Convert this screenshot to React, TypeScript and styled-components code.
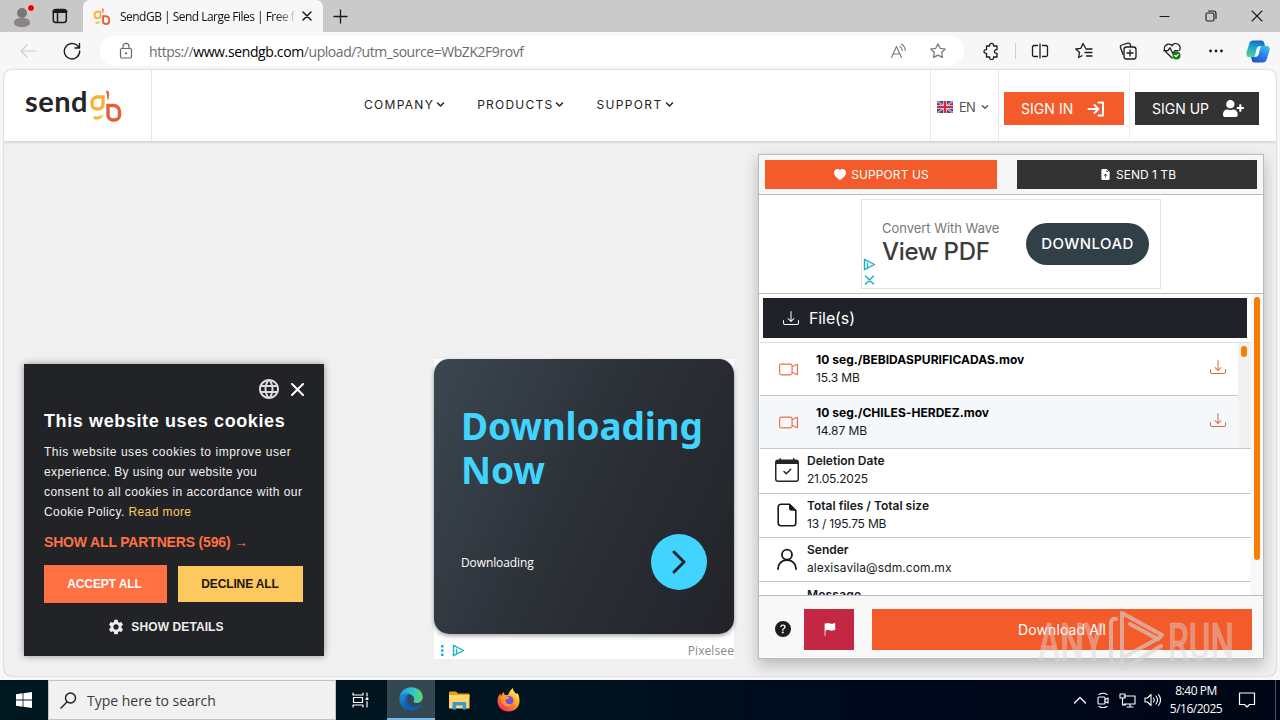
import React from "react";
import styled, { createGlobalStyle } from "styled-components";
import {
  BsCalendarCheck,
  BsCameraVideo,
  BsDownload,
  BsEnvelope,
  BsFileEarmarkArrowUpFill,
  BsFlagFill,
  BsHeartFill,
  BsQuestionCircleFill,
} from "react-icons/bs";
import { FaUserPlus } from "react-icons/fa";
import { MdLanguage, MdSettings } from "react-icons/md";

const Global = createGlobalStyle`
  *, *::before, *::after { box-sizing: border-box; }
  body { margin: 0; overflow: hidden; }
  svg { display: block; flex: none; }
  button { border: 0; margin: 0; padding: 0; background: none; font: inherit; color: inherit; }
`;

const segoe = '"Open Sans", "Noto Sans", sans-serif';
const inter = 'Inter, "Liberation Sans", sans-serif';

const Screen = styled.div`
  position: relative;
  display: flex;
  flex-direction: column;
  width: 1280px;
  height: 720px;
  overflow: hidden;
  background: #f7f7f7;
  font-family: ${inter};
  color: #212529;
`;

/* Text with the width tuned through letter-spacing */
const Label = styled.span<{ $size: number; $ls?: number; $weight?: number; $color?: string; $lh?: number }>`
  font-size: ${(p) => p.$size}px;
  letter-spacing: ${(p) => p.$ls ?? 0}px;
  font-weight: ${(p) => p.$weight ?? 400};
  color: ${(p) => p.$color ?? "inherit"};
  line-height: ${(p) => (p.$lh ? `${p.$lh}px` : "normal")};
  white-space: nowrap;
`;

/* ---------- Browser chrome ---------- */

const TabStrip = styled.div`
  display: flex;
  height: 32px;
  background: #cacaca;
  font-family: ${segoe};
`;

const TabTools = styled.div`
  display: flex;
  align-items: center;
  width: 83px;
  height: 32px;
  padding-left: 12px;
  gap: 16px;
  background: #c8c8c8;
  border-radius: 0 0 7px 0;
`;

const Tab = styled.div`
  display: flex;
  align-items: center;
  width: 240px;
  height: 32px;
  padding: 0 10px 0 10px;
  background: #f7f7f7;
  border-radius: 7px 7px 0 0;
`;

const TabTitle = styled.div`
  width: 176px;
  margin: 0 6px 0 9px;
  overflow: hidden;
  white-space: nowrap;
  font-size: 12px;
  letter-spacing: -0.52px;
  color: #111;
  mask-image: linear-gradient(90deg, #000 156px, transparent 178px);
`;

const TabRest = styled.div`
  display: flex;
  flex: 1;
  align-items: center;
  justify-content: space-between;
  padding: 0 17px 0 10px;
`;

const WindowButtons = styled.div`
  display: flex;
  align-items: center;
  gap: 34px;
`;

const Toolbar = styled.div`
  display: flex;
  align-items: center;
  height: 38px;
  padding: 0 10px 0 19px;
  background: #f7f7f7;
  font-family: ${segoe};
`;

const AddressBar = styled.div`
  display: flex;
  align-items: center;
  width: 864px;
  height: 30px;
  flex: none;
  margin-left: 19px;
  padding: 0 17px 0 18px;
  border-radius: 15px;
  background: #fff;
`;

const Url = styled.div`
  flex: 1;
  margin-left: 15px;
  font-size: 14px;
  letter-spacing: -0.45px;
  white-space: nowrap;
  color: #6c6c6c;
  b { font-weight: 400; color: #000; letter-spacing: -0.37px; }
`;

const Separator = styled.div<{ $gap: number }>`
  width: 1px;
  height: 16px;
  margin: 0 ${(p) => p.$gap}px;
  background: #cfcfcf;
`;

const Gap = styled.div<{ $w?: number }>`
  ${(p) => (p.$w ? `width: ${p.$w}px;` : "flex: 1;")}
`;

const ToolIcons = styled.div`
  display: flex;
  flex: 1;
  align-items: center;
  padding-left: 18px;
`;

const ActionIcons = styled.div<{ $gap: number }>`
  display: flex;
  align-items: center;
  gap: ${(p) => p.$gap}px;
`;

/* ---------- Page ---------- */

const Page = styled.div`
  display: flex;
  flex-direction: column;
  width: 1272px;
  height: 606px;
  margin: 0 4px 4px;
  overflow: hidden;
  border-radius: 8px;
  background: #f0f0f0;
  box-shadow: 0 0 2px rgba(0, 0, 0, 0.35);
`;

const Header = styled.header`
  display: flex;
  height: 71px;
  flex: none;
  background: #fff;
  box-shadow: 0 1px 3px rgba(0, 0, 0, 0.18);
`;

const LogoCell = styled.div`
  display: flex;
  width: 148px;
  padding: 13px 0 0 21px;
  border-right: 1px solid #e6e6e6;
`;

const LogoWord = styled.span`
  width: 64px;
  font-family: Lato, sans-serif;
  font-size: 29px;
  font-weight: 700;
  line-height: 36px;
  letter-spacing: 0.5px;
  color: #262427;
`;

const LogoMark = styled.div`
  padding-top: 5px;
`;

const Nav = styled.nav`
  display: flex;
  flex: 1;
  gap: 32px;
  padding: 27px 0 0 212px;
`;

const NavItem = styled.div`
  display: flex;
  align-items: center;
  height: 15px;
  gap: 2px;
`;

const HeaderCell = styled.div<{ $w: number; $last?: boolean }>`
  display: flex;
  width: ${(p) => p.$w}px;
  padding: 22px 5px 0;
  border-left: 1px solid ${(p) => (p.$last ? "#f0f0f0" : "#e9e9e9")};
`;

const Language = styled.div`
  display: flex;
  align-items: center;
  height: 30px;
  padding-left: 1px;
  gap: 6px;
`;

const AccountButton = styled.button<{ $dark?: boolean; $w: number }>`
  display: flex;
  align-items: center;
  justify-content: space-between;
  width: ${(p) => p.$w}px;
  height: 33px;
  flex: none;
  padding: 0 ${(p) => (p.$dark ? 15 : 19)}px 0 17px;
  background: ${(p) => (p.$dark ? "#333" : "#f35b2b")};
  color: #fff;
`;

const Body = styled.main`
  display: flex;
  flex: 1;
  align-items: flex-start;
  padding: 13px 0 0 20px;
`;

/* ---------- Cookie dialog ---------- */

const CookieBox = styled.section`
  width: 300px;
  height: 292px;
  margin-top: 210px;
  padding: 15px 20px 0;
  background: #212326;
  color: #fff;
  box-shadow: 0 0 7px rgba(0, 0, 0, 0.4);
  font-family: "Liberation Sans", Arial, sans-serif;
`;

const CookieTools = styled.div`
  display: flex;
  align-items: center;
  justify-content: flex-end;
  gap: 10px;
  height: 20px;
`;

const CookieTitle = styled.h2`
  margin: 11px 0 0;
  font-size: 18px;
  line-height: 22px;
  letter-spacing: 0.61px;
  white-space: nowrap;
`;

const CookieText = styled.div`
  display: flex;
  flex-direction: column;
  margin-top: 10px;
`;

const Link = styled.span`
  color: #fdc95e;
`;

const Partners = styled.div`
  margin-top: 11px;
  font-size: 14px;
  font-weight: 700;
  line-height: 19px;
  letter-spacing: -0.17px;
  white-space: nowrap;
  color: #ff7043;
`;

const CookieButtons = styled.div`
  display: flex;
  align-items: center;
  justify-content: space-between;
  height: 38px;
  margin-top: 13px;
`;

const CookieButton = styled.button<{ $accept?: boolean }>`
  width: ${(p) => (p.$accept ? 123 : 125)}px;
  height: ${(p) => (p.$accept ? 38 : 36)}px;
  margin-right: ${(p) => (p.$accept ? 0 : 1)}px;
  padding: 0 ${(p) => (p.$accept ? 2 : 1)}px 2px 0;
  background: ${(p) => (p.$accept ? "#ff7043" : "#fdc95e")};
  color: ${(p) => (p.$accept ? "#fff" : "#21170f")};
`;

const Details = styled.div`
  display: flex;
  align-items: center;
  justify-content: center;
  gap: 6px;
  margin: 15px 17px 0 0;
  color: #ededed;
`;

/* ---------- Centre advert ---------- */

const Advert = styled.section`
  width: 300px;
  height: 300px;
  margin: 205px 0 0 110px;
  background: #fff;
  font-family: "Open Sans", sans-serif;
`;

const AdvertCard = styled.div`
  display: flex;
  flex-direction: column;
  justify-content: space-between;
  height: 275px;
  padding: 45px 27px 44px;
  border-radius: 15px;
  background: linear-gradient(115deg, #3b4751 0%, #2c3037 50%, #212328 100%);
  box-shadow: 0 2px 4px rgba(0, 0, 0, 0.35);
`;

const AdvertTitle = styled.div`
  font-family: "Noto Sans", sans-serif;
  font-size: 37px;
  font-weight: 700;
  line-height: 44px;
  letter-spacing: -0.15px;
  color: #40d4ff;
`;

const AdvertRow = styled.div`
  display: flex;
  align-items: center;
  justify-content: space-between;
`;

const Round = styled.div`
  display: flex;
  align-items: center;
  justify-content: center;
  width: 56px;
  height: 56px;
  border-radius: 50%;
  background: #40d4ff;
`;

const AdvertFoot = styled.div`
  display: flex;
  align-items: center;
  height: 22px;
  padding-left: 6px;
  gap: 7px;
  margin-top: 5px;
`;

const Push = styled.span`
  margin-left: auto;
  line-height: 1;
`;

/* ---------- Download panel ---------- */

const Panel = styled.section`
  display: flex;
  flex-direction: column;
  width: 506px;
  height: 505px;
  margin: 0 0 0 24px;
  border: 1px solid #b7bcc0;
  background: #fff;
  box-shadow: 0 6px 14px rgba(0, 0, 0, 0.24);
`;

const PanelTop = styled.div`
  display: flex;
  justify-content: space-between;
  height: 40px;
  padding: 5px 6px 0;
  background: #f7f7f7;
  border-bottom: 1px solid #b7bcc0;
`;

const TopButton = styled.button<{ $dark?: boolean }>`
  display: flex;
  align-items: center;
  justify-content: center;
  gap: 5px;
  width: ${(p) => (p.$dark ? 240 : 232)}px;
  height: 29px;
  padding-left: ${(p) => (p.$dark ? 2 : 1)}px;
  background: ${(p) => (p.$dark ? "#333" : "#f35b2b")};
  color: #fff;
`;

const Banner = styled.div`
  display: flex;
  justify-content: center;
  height: 99px;
  padding-top: 4px;
  border-bottom: 1px solid #b7bcc0;
`;

const BannerCard = styled.div`
  display: flex;
  width: 300px;
  height: 90px;
  border: 1px solid #e2e2e2;
`;

const BannerMarks = styled.div`
  display: flex;
  flex-direction: column;
  width: 20px;
  padding: 58px 0 0 1px;
  gap: 4px;
`;

const BannerCopy = styled.div`
  display: flex;
  flex-direction: column;
  width: 144px;
  padding-top: 19px;
`;

const BannerButton = styled.div`
  display: flex;
  align-items: center;
  justify-content: center;
  width: 123px;
  height: 42px;
  margin-top: 23px;
  padding-bottom: 1px;
  border-radius: 21px;
  background: #313f46;
`;

const ScrollArea = styled.div`
  display: flex;
  height: 301px;
  overflow: hidden;
`;

const ScrollContent = styled.div`
  width: 492px;
  flex: none;
`;

const OuterTrack = styled.div`
  width: 12px;
  padding: 3px 0 0 3px;
  background: #f8f8f8;
`;

const Thumb = styled.div<{ $w: number; $h: number }>`
  width: ${(p) => p.$w}px;
  height: ${(p) => p.$h}px;
  border-radius: 3px;
  background: #f77d05;
`;

const FilesBar = styled.div`
  display: flex;
  align-items: center;
  width: 484px;
  height: 40px;
  margin: 4px 0 4px 4px;
  padding-left: 20px;
  gap: 10px;
  background: #20222a;
  color: #fff;
`;

const FileList = styled.div`
  display: flex;
  margin-left: 1px;
  height: 107px;
  border: solid #c5c8ca;
  border-width: 1px 0;
  border-top-color: #dcdedf;
`;

const FileRows = styled.div`
  width: 478px;
`;

const FileRow = styled.div<{ $alt?: boolean }>`
  display: flex;
  align-items: center;
  height: ${(p) => (p.$alt ? 52 : 53)}px;
  padding: 0 12px 0 19px;
  border-bottom: ${(p) => (p.$alt ? 0 : 1)}px solid #c5c8ca;
  background: ${(p) => (p.$alt ? "#f5f8fb" : "#fff")};
  color: #e8704f;
`;

const DownloadIcon = styled(BsDownload)`
  margin-bottom: 4px;
  color: #dd6740;
`;

const TextPair = styled.div`
  display: flex;
  flex: 1;
  flex-direction: column;
  margin-top: -2px;
  color: #17191c;
`;

const FileText = styled(TextPair)`
  margin-top: 0;
  padding-left: 18px;
`;

const InnerTrack = styled.div`
  width: 13px;
  padding: 3px 0 0 3px;
  background: #f1f1f1;
`;

const InfoRow = styled.div<{ $h: number }>`
  display: flex;
  align-items: center;
  height: ${(p) => p.$h}px;
  padding-left: 16px;
  gap: 8px;
  border-bottom: 1px solid #c5c8ca;
`;

const InfoIcon = styled.div`
  margin-top: -2px;
`;

const PanelFoot = styled.div`
  display: flex;
  align-items: center;
  flex: 1;
  padding: 4px 11px 0 16px;
  border-top: 1px solid #b7bcc0;
  background: #f8f8f8;
`;

const FlagButton = styled.button`
  display: flex;
  align-items: center;
  justify-content: center;
  width: 50px;
  height: 41px;
  margin: 0 18px 0 13px;
  background: #c32744;
  color: #fff;
`;

const DownloadAll = styled.button`
  flex: 1;
  height: 41px;
  background: #f35b2b;
`;

/* ---------- Taskbar ---------- */

const Taskbar = styled.footer`
  display: flex;
  align-items: center;
  height: 40px;
  flex: none;
  background: linear-gradient(90deg, #001820 0%, #00141f 40%, #000a1d 65%, #000616 100%);
  color: #fff;
  font-family: ${segoe};
`;

const TaskCell = styled.div<{ $w: number; $active?: boolean }>`
  display: flex;
  align-items: center;
  justify-content: center;
  width: ${(p) => p.$w}px;
  height: 40px;
  background: ${(p) => (p.$active ? "#344851" : "transparent")};
  border-bottom: ${(p) => (p.$active ? "2px solid #76b9ed" : "0")};
`;

const Search = styled.div`
  display: flex;
  align-items: center;
  width: 288px;
  height: 40px;
  padding-left: 11px;
  gap: 10px;
  border: 1px solid #c4c4c4;
  background: #f1f1f1;
`;

const Tray = styled.div`
  display: flex;
  align-items: center;
  margin-left: auto;
  gap: 8px;
`;

const TrayIcons = styled.div`
  display: flex;
  align-items: center;
  gap: 8px;
  margin-right: 1px;
`;

const Clock = styled.div`
  display: flex;
  flex-direction: column;
  align-items: center;
  width: 54px;
  margin: 0 1px 0 -1px;
`;

const Notice = styled.div`
  padding-left: 6px;
`;

const ShowDesktop = styled.div`
  width: 5px;
  height: 40px;
  margin-left: 11px;
  border-left: 1px solid #4b5460;
`;

const Watermark = styled.svg`
  position: absolute;
  left: 1030px;
  top: 600px;
`;

/* ---------- Icons ---------- */

type LineProps = { w?: number; h?: number; box?: string; sw?: number; color?: string; children: React.ReactNode };

const Line = ({ w = 18, h = w, box, sw = 1.2, color = "#1b1b1b", children }: LineProps) => (
  <svg width={w} height={h} viewBox={box ?? `0 0 ${w} ${h}`} fill="none" stroke={color} strokeWidth={sw} strokeLinecap="round" strokeLinejoin="round">
    {children}
  </svg>
);

const star = "M9 1.8l2.2 4.5 5 .7-3.6 3.5.9 4.9L9 13.1l-4.5 2.3.9-4.9L1.8 7l5-.7z";

const GbShape = () => (
  <>
    <path d="M14 9H8.500A5.500 5.500 0 0 0 3 14.500V16a5 5 0 0 0 5 5h1a5 5 0 0 0 5-5z" stroke="#f9b233" />
    <path d="M4.500 28.200c3.500.6 7.500.3 10-2.200-1 4.500-6 7-10 4.700z" fill="#f9b233" stroke="none" />
    <path d="M16.800 2.200l3 1.300c.8 3 .3 6.500-1.300 9.500-.2-4-.5-7-1.700-10.800z" fill="#e2603a" stroke="none" />
    <path d="M19 17.500V27a5 5 0 0 0 5 5h1.500a5 5 0 0 0 5-5v-3.500a6 6 0 0 0-6-6z" stroke="#e2603a" />
  </>
);

const Favicon = () => (
  <svg width="18" height="18" viewBox="0 0 34 34" fill="none" strokeWidth="3.600">
    <GbShape />
  </svg>
);

const GbMark = () => (
  <svg width="34" height="34" viewBox="0 0 34 34" fill="none" strokeWidth="3.400">
    <GbShape />
  </svg>
);

const Chevron = ({ size = 9, sw = 1.5, color = "#222" }) => (
  <Line w={size} h={size} box="0 0 9 9" sw={sw} color={color}>
    <path d="M1.500 3l3 3 3-3" />
  </Line>
);

const AdChoice = () => (
  <Line w={13} h={13} sw={1.4} color="#1cb0c4">
    <path d="M1.500 1.300v10.400l10-5.200zM4.500 5.300v4" />
  </Line>
);

const Flag = () => (
  <svg width="16" height="12" viewBox="0 0 16 12">
    <rect width="16" height="12" rx="1" fill="#3b4590" />
    <path d="M0 0l16 12M16 0L0 12" stroke="#e8d5e4" strokeWidth="1.800" />
    <path d="M0 0l16 12M16 0L0 12" stroke="#d6283c" strokeWidth="0.800" />
    <path d="M8 0v12M0 6h16" stroke="#f4e6ec" strokeWidth="3.600" />
    <path d="M8 0v12M0 6h16" stroke="#d6283c" strokeWidth="2.200" />
  </svg>
);

const SignInIcon = () => (
  <Line w={18} h={16} sw={2} color="#fff">
    <path d="M1.500 8h9.500M7.500 4l4 4-4 4M11.500 1.500H16v13h-4.500" />
  </Line>
);

const Document = () => (
  <svg width="24" height="24" viewBox="0 0 24 24" fill="none">
    <path d="M14.500 1.200H6A2.800 2.800 0 0 0 3.200 4v16A2.800 2.800 0 0 0 6 22.800h12a2.800 2.800 0 0 0 2.800-2.800V7.500z" stroke="#16181b" strokeWidth="1.600" />
    <path d="M14 .6v4.500a2.600 2.600 0 0 0 2.600 2.600h4.700z" fill="#16181b" />
  </svg>
);

const Copilot = () => (
  <svg width="24" height="23" viewBox="0 0 24 23">
    <defs>
      <linearGradient id="cpA" x1="0.5" y1="0" x2="0.3" y2="1">
        <stop offset="0" stopColor="#1568c8" />
        <stop offset="0.45" stopColor="#1fa8cf" />
        <stop offset="1" stopColor="#4fd29a" />
      </linearGradient>
      <linearGradient id="cpB" x1="0.8" y1="0" x2="0.2" y2="1">
        <stop offset="0" stopColor="#35c0ee" />
        <stop offset="0.5" stopColor="#2b7fea" />
        <stop offset="1" stopColor="#1e50c8" />
      </linearGradient>
    </defs>
    <path d="M7 .5h8.500c1.500 0 2.300 1 2.700 2.300L19 6h-3c-2 0-3 1-3.600 3l-1.800 5.500C10 16.500 9 17 7 17H3C.8 17 0 15 .5 12.500L3.300 3.500C4 1.500 5 .5 7 .5z" fill="url(#cpA)" />
    <path d="M17 22.500H8.500c-1.500 0-2.300-1-2.700-2.300L5 17h3c2 0 3-1 3.600-3l1.800-5.500C14 6.500 15 6 17 6h4c2.200 0 3 2 2.500 4.500l-2.800 9c-.7 2-1.700 3-3.700 3z" fill="url(#cpB)" />
    <path d="M11 7.500q1-1.500 4-1.500l-2.500 9q-1 2-4 2z" fill="#eef8ff" />
  </svg>
);

const EdgeLogo = () => (
  <svg width="24" height="24" viewBox="0 0 24 24">
    <defs>
      <linearGradient id="edA" x1="0" y1="0.4" x2="1" y2="0.4">
        <stop offset="0" stopColor="#2496dc" />
        <stop offset="0.55" stopColor="#30c3d6" />
        <stop offset="1" stopColor="#63d957" />
      </linearGradient>
      <linearGradient id="edB" x1="0" y1="0" x2="0.4" y2="1">
        <stop offset="0" stopColor="#1e8fdc" />
        <stop offset="1" stopColor="#0d58ad" />
      </linearGradient>
    </defs>
    <path d="M.5 11C1 4.500 6 .3 12.200.3c6.500 0 11.500 4.300 11.500 9.700 0 3.700-2.700 6-6 6-2.200 0-3.500-.8-3.200-1.700 1-1.300 1-4-1-5.500C9.500 5.500 3 6.500.5 11z" fill="url(#edA)" />
    <path d="M.4 11.500C2 7 6.800 6 10 7.200c-3 1.300-4 4.800-3.400 8 .8 4.500 4 7.500 8.200 8.200-1 .3-2 .4-3 .4C5.200 23.800 0 18 .4 11.500z" fill="url(#edB)" />
    <path d="M8.700 12c-1.200 5 3.500 9 9 7.500 1.800-.5 3-1.300 4-1.700.6-.2.8.3.5.8-3 4.700-9 6.300-13 3.400-4.600-3.200-4.500-10 .6-14.300-.6 1.500-.9 3-1.100 4.300z" fill="#0f5fb8" />
  </svg>
);

const Folder = () => (
  <svg width="21" height="19" viewBox="0 0 21 19">
    <path d="M0 1.500Q0 .5 1 .5h6l2 2h10.500q1 0 1 1V6H0z" fill="#e2a11c" />
    <path d="M0 4h20.500v13.500H0z" fill="#ffd867" />
    <path d="M3.500 18.500v-6.500q0-1 1-1h11.700q1 0 1 1v6.500h-3.500v-4H7v4z" fill="#3b97d9" />
  </svg>
);

const Firefox = () => (
  <svg width="23" height="24" viewBox="0 0 23 24">
    <defs>
      <linearGradient id="ffA" x1="0.8" y1="0.1" x2="0.2" y2="0.9">
        <stop offset="0" stopColor="#fff04a" />
        <stop offset="0.45" stopColor="#ff9a24" />
        <stop offset="1" stopColor="#fb2f5c" />
      </linearGradient>
    </defs>
    <path d="M11.500 23.500C5 23.500.5 19 .5 13c0-3 1-5.500 2.800-7.500l.5 2.700L6.500 4l1.500 3h3c1-3 2.500-5 4.800-7 .2 3 2 4 3.700 6l1-1c1.500 2.500 2 5 2 8 0 6-4.500 10.500-11 10.500z" fill="url(#ffA)" />
    <circle cx="12" cy="12.500" r="4.500" fill="#7c4be0" />
    <path d="M4 8c3-1.500 6 0 8.500 1.500-1 1.500-3 1.500-4 2.500-.5 3.500 3 5 6 3.500-2 4-8.500 3.500-10-1.500z" fill="#ff9a2d" />
  </svg>
);

const Person = () => (
  <Line w={24} h={24} sw={1.8} color="#16181b">
    <circle cx="12" cy="7.700" r="5" />
    <path d="M3 22c0-5.200 3.500-9 9-9s9 3.800 9 9" />
  </Line>
);

const infoRows = [
  { icon: <BsCalendarCheck size={24} />, title: "Deletion Date", value: "21.05.2025", h: 45, ls: -0.02, vls: -0.2 },
  { icon: <Document />, title: "Total files / Total size", value: "13 / 195.75 MB", h: 44, ls: 0, vls: -0.2 },
  { icon: <Person />, title: "Sender", value: "alexisavila@sdm.com.mx", h: 44, ls: 0, vls: 0.1 },
  { icon: <BsEnvelope size={24} />, title: "Message", value: "", h: 46, ls: 0.2, vls: 0 },
];

const files = [
  { name: "10 seg./BEBIDASPURIFICADAS.mov", size: "15.3 MB" },
  { name: "10 seg./CHILES-HERDEZ.mov", size: "14.87 MB" },
];

const cookieLines = [
  { text: "This website uses cookies to improve user", ls: 0.53 },
  { text: "experience. By using our website you", ls: 0.4 },
  { text: "consent to all cookies in accordance with our", ls: 0.45 },
];

const nav = [
  { text: "COMPANY", ls: 1.3 },
  { text: "PRODUCTS", ls: 1.24 },
  { text: "SUPPORT", ls: 1.35 },
];

const Chrome = () => (
  <>
    <TabStrip>
      <TabTools>
        <svg width="24" height="24" viewBox="0 0 24 24">
          <circle cx="10" cy="9" r="5" fill="#777" />
          <path d="M2 19c0-4 3-5 8-5s8 1 8 5c0 2-3 4-8 4s-8-2-8-4z" fill="#8a8583" />
          <circle cx="19" cy="4" r="4" fill="#f3c9c9" />
          <circle cx="19" cy="4" r="3" fill="#e00b0b" />
        </svg>
        <Line w={16} h={16} sw={1.5}>
          <rect x="1.300" y="1.500" width="13" height="13" rx="2.500" />
          <path d="M2 3.500h12" strokeWidth="3" />
          <path d="M5.500 4v10" />
        </Line>
      </TabTools>
      <Tab>
        <Favicon />
        <TabTitle>SendGB | Send Large Files | Free f</TabTitle>
        <Line w={10} h={10} sw={1.5}>
          <path d="M1 1l8 8M9 1L1 9" />
        </Line>
      </Tab>
      <TabRest>
        <Line w={15} h={15} sw={1.3}>
          <path d="M7.500 1v13M1 7.500h13" />
        </Line>
        <WindowButtons>
          <Line w={12} h={12} sw={1}>
            <path d="M1 6.500h9" />
          </Line>
          <Line w={12} h={12} sw={1.1}>
            <rect x="1" y="3" width="8" height="8" rx="1.500" />
            <path d="M3.500 1h5a2.500 2.500 0 0 1 2.500 2.500v5" />
          </Line>
          <Line w={12} h={12} sw={1.1}>
            <path d="M1 1l10 10M11 1L1 11" />
          </Line>
        </WindowButtons>
      </TabRest>
    </TabStrip>
    <Toolbar>
      <Line w={18} color="#cfcfcf">
        <path d="M17 9H2M8 3L2 9l6 6" />
      </Line>
      <Gap $w={26} />
      <Line w={18} sw={1.4}>
        <path d="M16 6A7.700 7.700 0 1 0 16.700 9M16.500 1.500V6H12" />
      </Line>
      <AddressBar>
        <Line w={16} h={18} color="#666">
          <rect x="2.500" y="6.500" width="11" height="9.500" rx="1.500" />
          <path d="M5 6.500V4.300a3 3 0 0 1 6 0v2.200" />
          <circle cx="8" cy="11.300" r="0.500" fill="#666" />
        </Line>
        <Url>
          https://<b>www.sendgb.com</b>/upload/?utm_source=WbZK2F9rovf
        </Url>
        <ActionIcons $gap={22}>
          <Line w={17} h={17} color="#767676" sw={1.1}>
            <path d="M1.500 14.500l5-11 5 11M3.300 11h6.400M10 3.500a5 5 0 0 1 2.300 4M11.300 1a8 8 0 0 1 4 6.500" />
          </Line>
          <Line color="#767676">
            <path d={star} />
          </Line>
        </ActionIcons>
      </AddressBar>
      <ToolIcons>
        <Line sw={1.3}>
          <path d="M4.500 4h3.200a2 2 0 1 1 3.800 0H15v3.700a1.900 1.900 0 1 0 0 3.600V15h-3.500a2 2 0 1 1-3.800 0H4.500v-3.700a1.900 1.900 0 1 1 0-3.600z" />
        </Line>
        <Separator $gap={15} />
        <ActionIcons $gap={26}>
          <Line sw={1.3}>
            <path d="M6.500 3.500H3A1.500 1.500 0 0 0 1.500 5v8A1.500 1.500 0 0 0 3 14.500h3.500M11.500 3.500H15A1.500 1.500 0 0 1 16.500 5v8a1.500 1.500 0 0 1-1.500 1.500h-3.500M9 2v14" />
          </Line>
          <Line sw={1.3}>
            <path d="M10.500 6L8 1.500 5.800 6.300l-5 .7 3.700 3.500-.9 5L7 13.700M11 7h6M10 10.500h7M11.500 14H17" />
          </Line>
          <Line sw={1.3}>
            <path d="M4 12.500L1.500 5.500A2 2 0 0 1 2.800 3l6-1.800a2 2 0 0 1 2.500 1.300L11.700 4" />
            <rect x="5" y="5" width="12" height="12" rx="2.500" />
            <path d="M11 8v6M8 11h6" />
          </Line>
          <Line sw={1.3}>
            <path d="M9 16L2.500 9.500A4.300 4.300 0 0 1 9 3.700a4.300 4.300 0 0 1 7.500 4.500M.8 8.700H5l2-3 3 6 2-3h3" />
            <circle cx="13.500" cy="13.500" r="4" fill="#107c10" stroke="none" />
            <path d="M11.700 13.500l1.300 1.200 2.200-2.300" stroke="#fff" />
          </Line>
          <Line>
            <circle cx="3.500" cy="9" r="0.800" fill="#1b1b1b" />
            <circle cx="9" cy="9" r="0.800" fill="#1b1b1b" />
            <circle cx="14.500" cy="9" r="0.800" fill="#1b1b1b" />
          </Line>
        </ActionIcons>
        <Gap />
        <Copilot />
      </ToolIcons>
    </Toolbar>
  </>
);

const SiteHeader = () => (
  <Header>
    <LogoCell>
      <LogoWord>send</LogoWord>
      <LogoMark>
        <GbMark />
      </LogoMark>
    </LogoCell>
    <Nav>
      {nav.map((n) => (
        <NavItem key={n.text}>
          <Label $size={12} $ls={n.ls} $weight={400} $color="#222">
            {n.text}
          </Label>
          <Chevron />
        </NavItem>
      ))}
    </Nav>
    <HeaderCell $w={68}>
      <Language>
        <Flag />
        <Label $size={13} $ls={-0.8} $color="#555">
          EN
        </Label>
        <Chevron size={8} color="#555" />
      </Language>
    </HeaderCell>
    <HeaderCell $w={131}>
      <AccountButton $w={120}>
        <Label $size={14} $ls={0.05} $weight={400}>
          SIGN IN
        </Label>
        <SignInIcon />
      </AccountButton>
    </HeaderCell>
    <HeaderCell $w={147} $last>
      <AccountButton $w={124} $dark>
        <Label $size={14} $ls={0} $weight={400}>
          SIGN UP
        </Label>
        <FaUserPlus size={21} />
      </AccountButton>
    </HeaderCell>
  </Header>
);

const Cookies = () => (
  <CookieBox>
    <CookieTools>
      <MdLanguage size={24} color="#dcdcdc" />
      <Line w={13} h={13} sw={2} color="#fff">
        <path d="M1 1l11 11M12 1L1 12" />
      </Line>
    </CookieTools>
    <CookieTitle>This website uses cookies</CookieTitle>
    <CookieText>
      {cookieLines.map((l) => (
        <Label key={l.text} $size={12} $ls={l.ls} $lh={20} $color="#f1f1f1">
          {l.text}
        </Label>
      ))}
      <Label $size={12} $ls={0.4} $lh={20} $color="#f1f1f1">
        Cookie Policy. <Link>Read more</Link>
      </Label>
    </CookieText>
    <Partners>SHOW ALL PARTNERS (596) →</Partners>
    <CookieButtons>
      <CookieButton $accept>
        <Label $size={12} $weight={700} $ls={-0.1}>
          ACCEPT ALL
        </Label>
      </CookieButton>
      <CookieButton>
        <Label $size={12} $weight={700} $ls={-0.12}>
          DECLINE ALL
        </Label>
      </CookieButton>
    </CookieButtons>
    <Details>
      <MdSettings size={18} />
      <Label $size={12} $weight={700} $ls={0.1}>
        SHOW DETAILS
      </Label>
    </Details>
  </CookieBox>
);

const CenterAd = () => (
  <Advert>
    <AdvertCard>
      <AdvertTitle>
        Downloading
        <br />
        Now
      </AdvertTitle>
      <AdvertRow>
        <Label $size={12} $ls={-0.1} $color="#fff">
          Downloading
        </Label>
        <Round>
          <Line w={16} h={26} sw={3} color="#20262c">
            <path d="M3 3l10 10L3 23" />
          </Line>
        </Round>
      </AdvertRow>
    </AdvertCard>
    <AdvertFoot>
      <svg width="5" height="13" viewBox="0 0 5 13" fill="#1cb0c4">
        <rect x="1" y="1" width="2.500" height="2.500" />
        <rect x="1" y="5.300" width="2.500" height="2.500" />
        <rect x="1" y="9.600" width="2.500" height="2.500" />
      </svg>
      <AdChoice />
      <Push>
        <Label $size={12} $ls={0.1} $color="#888">
          Pixelsee
        </Label>
      </Push>
    </AdvertFoot>
  </Advert>
);

const DownloadPanel = () => (
  <Panel>
    <PanelTop>
      <TopButton>
        <BsHeartFill size={12} />
        <Label $size={12} $ls={0.1}>
          SUPPORT US
        </Label>
      </TopButton>
      <TopButton $dark>
        <BsFileEarmarkArrowUpFill size={11} />
        <Label $size={12} $ls={0.02}>
          SEND 1 TB
        </Label>
      </TopButton>
    </PanelTop>
    <Banner>
      <BannerCard>
        <BannerMarks>
          <AdChoice />
          <Line w={13} h={10} sw={1.5} color="#1cb0c4">
            <path d="M2.500 1l8 8M10.500 1l-8 8" />
          </Line>
        </BannerMarks>
        <BannerCopy>
          <Label $size={13} $ls={-0.03} $lh={19} $color="#777">
            Convert With Wave
          </Label>
          <Label $size={24} $ls={-0.3} $lh={27} $weight={500} $color="#3c3c3c">
            View PDF
          </Label>
        </BannerCopy>
        <BannerButton>
          <Label $size={15} $ls={0.45} $weight={500} $color="#fff">
            DOWNLOAD
          </Label>
        </BannerButton>
      </BannerCard>
    </Banner>
    <ScrollArea>
      <ScrollContent>
        <FilesBar>
          <BsDownload size={16} />
          <Label $size={16} $ls={-0.1}>
            File(s)
          </Label>
        </FilesBar>
        <FileList>
          <FileRows>
            {files.map((f, i) => (
              <FileRow key={f.name} $alt={i === 1}>
                <BsCameraVideo size={19} />
                <FileText>
                  <Label $size={12} $weight={700} $ls={0.03} $lh={18} $color="#000">
                    {f.name}
                  </Label>
                  <Label $size={12} $ls={-0.1} $lh={18}>
                    {f.size}
                  </Label>
                </FileText>
                <DownloadIcon size={16} />
              </FileRow>
            ))}
          </FileRows>
          <InnerTrack>
            <Thumb $w={6} $h={11} />
          </InnerTrack>
        </FileList>
        {infoRows.map((r) => (
          <InfoRow key={r.title} $h={r.h}>
            <InfoIcon>{r.icon}</InfoIcon>
            <TextPair>
              <Label $size={12} $weight={600} $ls={r.ls} $lh={18}>
                {r.title}
              </Label>
              <Label $size={12} $ls={r.vls} $lh={18}>
                {r.value || "\u00a0"}
              </Label>
            </TextPair>
          </InfoRow>
        ))}
      </ScrollContent>
      <OuterTrack>
        <Thumb $w={6} $h={263} />
      </OuterTrack>
    </ScrollArea>
    <PanelFoot>
      <BsQuestionCircleFill size={16} color="#1b1d20" />
      <FlagButton>
        <BsFlagFill size={13} />
      </FlagButton>
      <DownloadAll>
        <Label $size={14} $ls={0.12} $color="#fff">
          Download All
        </Label>
      </DownloadAll>
    </PanelFoot>
  </Panel>
);

const AnyRun = () => (
  <Watermark width="210" height="76" viewBox="0 0 210 76" fill="none">
    <g fontFamily="Roboto, sans-serif" fontSize="52" fontWeight="500" fill="#d6d6d6" fillOpacity="0.45" stroke="#fff" strokeOpacity="0.2" strokeWidth="1">
      <text x="8" y="60" textLength="66" lengthAdjust="spacingAndGlyphs">
        ANY
      </text>
      <text x="138" y="60" textLength="66" lengthAdjust="spacingAndGlyphs">
        RUN
      </text>
    </g>
    <g stroke="#d6d6d6" strokeOpacity="0.6" strokeWidth="4" strokeLinejoin="round" strokeLinecap="round">
      <path d="M86 19q-5-1-5 5v36q0 5 4 5l7 3q2 1 5-1l34-21M92 58V13l40 22-4 4-28-15M92 58l37-20M92 58v8" />
    </g>
  </Watermark>
);

const WindowsTaskbar = () => (
  <Taskbar>
    <TaskCell $w={48}>
      <svg width="16" height="16" viewBox="0 0 16 16" fill="#fff">
        <path d="M0 2.200l6.600-.9v6.200H0zM7.400 1.200L16 0v7.500H7.400zM0 8.400h6.600v6.300L0 13.800zM7.400 8.400H16V16l-8.600-1.200z" />
      </svg>
    </TaskCell>
    <Search>
      <Line w={17} h={17} sw={1.4}>
        <circle cx="10.500" cy="6" r="5" />
        <path d="M7 10l-6 6" />
      </Line>
      <Label $size={14} $ls={0} $color="#3a3a3a">
        Type here to search
      </Label>
    </Search>
    <TaskCell $w={49}>
      <Line w={17} h={16} sw={1.2} color="#fff">
        <path d="M1 1v2h10V1M1 15v-2h10v2M1.500 5.500h9v5h-9zM15 1v3M15 9.500V15" />
        <rect x="14.300" y="6" width="1.500" height="1.500" fill="#fff" />
      </Line>
    </TaskCell>
    <Gap $w={2} />
    <TaskCell $w={48} $active>
      <EdgeLogo />
    </TaskCell>
    <TaskCell $w={49}>
      <Folder />
    </TaskCell>
    <TaskCell $w={49}>
      <Firefox />
    </TaskCell>
    <Tray>
      <TrayIcons>
        <Line w={14} h={14} sw={1.3} color="#fff">
          <path d="M1.500 10L7 4.500l5.500 5.500" />
        </Line>
        <Line w={16} h={16} sw={1.1} color="#fff">
          <rect x="3" y="5" width="7" height="7" rx="1" />
          <path d="M10 7.500l3-1.500v5l-3-1.500M4 2.500q4-2.500 8 0M4 14.500q4 2.500 8 0" />
        </Line>
        <Line w={17} h={16} sw={1.1} color="#fff">
          <path d="M5 4h11v8H5M8 15h6M11 12v3M1 2h5v4H1zM3.500 6v7h3" />
        </Line>
        <Line w={17} h={16} sw={1.1} color="#fff">
          <path d="M1 6h2.500L7 2.500v11L3.500 10H1zM9.500 6q1.500 2 0 4M12 4q3 4 0 8M14.500 2.500q4 5.500 0 11" />
        </Line>
      </TrayIcons>
      <Clock>
        <Label $size={12} $ls={-0.45} $lh={18}>
          8:40 PM
        </Label>
        <Label $size={12} $ls={-0.5} $lh={18}>
          5/16/2025
        </Label>
      </Clock>
      <Notice>
        <Line w={18} h={18} sw={1.2} color="#fff">
          <path d="M1.500 2h15v11.500h-5L9 16l-2.500-2.500h-5z" />
        </Line>
      </Notice>
      <ShowDesktop />
    </Tray>
  </Taskbar>
);

export default function App() {
  return (
    <Screen>
      <Global />
      <Chrome />
      <Page>
        <SiteHeader />
        <Body>
          <Cookies />
          <CenterAd />
          <DownloadPanel />
        </Body>
      </Page>
      <WindowsTaskbar />
      <AnyRun />
    </Screen>
  );
}
